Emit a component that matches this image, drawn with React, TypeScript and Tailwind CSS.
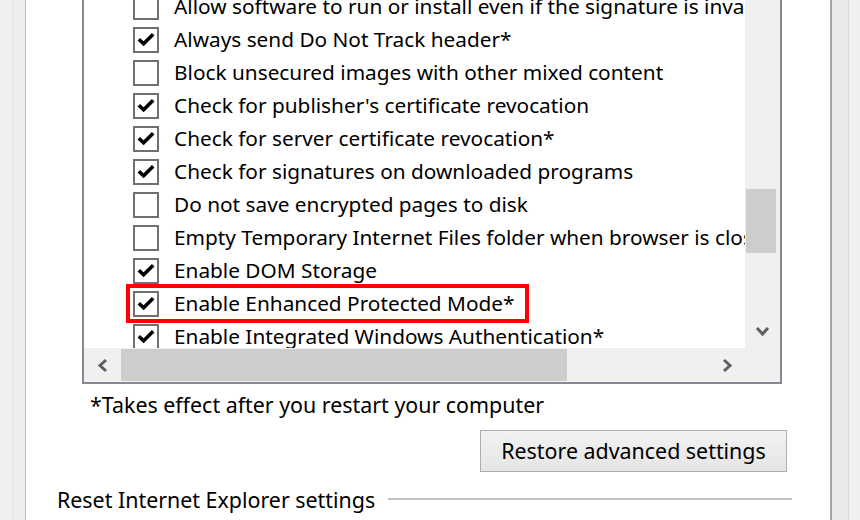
import React from 'react';

type Item = { label: string; checked: boolean; highlight?: boolean };

const items: Item[] = [
  { label: 'Allow software to run or install even if the signature is invalid', checked: false },
  { label: 'Always send Do Not Track header*', checked: true },
  { label: 'Block unsecured images with other mixed content', checked: false },
  { label: "Check for publisher's certificate revocation", checked: true },
  { label: 'Check for server certificate revocation*', checked: true },
  { label: 'Check for signatures on downloaded programs', checked: true },
  { label: 'Do not save encrypted pages to disk', checked: false },
  { label: 'Empty Temporary Internet Files folder when browser is closed', checked: false },
  { label: 'Enable DOM Storage', checked: true },
  { label: 'Enable Enhanced Protected Mode*', checked: true, highlight: true },
  { label: 'Enable Integrated Windows Authentication*', checked: true },
];

function CheckBox({ checked }: { checked: boolean }) {
  return (
    <div className="w-[26px] h-[26px] shrink-0 border-2 border-[#707070] bg-white flex items-center justify-center">
      {checked && (
        <svg width="18" height="15" viewBox="0 0 18 15">
          <path d="M1.8 7.2 L6.6 11.8 L16.2 2.2" fill="none" stroke="#000" strokeWidth="3.6" strokeLinejoin="miter" />
        </svg>
      )}
    </div>
  );
}

function Chevron({ dir }: { dir: 'left' | 'right' | 'down' }) {
  const d =
    dir === 'left' ? 'M9 2 L3 7.5 L9 13' : dir === 'right' ? 'M3 2 L9 7.5 L3 13' : 'M2 3 L7.5 9 L13 3';
  const size = dir === 'down' ? { w: 15, h: 12 } : { w: 12, h: 15 };
  return (
    <svg width={size.w} height={size.h} viewBox={`0 0 ${size.w} ${size.h}`}>
      <path d={d} fill="none" stroke="#606060" strokeWidth="3" />
    </svg>
  );
}

export default function App() {
  return (
    <div
      className="w-[860px] h-[520px] overflow-hidden bg-[#f0f0f0] flex text-black text-[21.4px]"
      style={{ fontFamily: '"Noto Sans", "Open Sans", sans-serif' }}
    >
      {/* left window frame */}
      <div className="w-[12px] bg-[#f0f0f0]" />
      <div className="w-[1px] bg-[#e4e4e4]" />
      <div className="w-[12px] bg-[#ededed]" />
      <div className="w-[1px] bg-[#bdbdbd]" />

      {/* tab page */}
      <div className="w-[804px] bg-white flex flex-col">
        {/* settings list */}
        <div className="ml-[56px] w-[700px] border-x-2 border-b-2 border-[#858a91] flex flex-col">
          <div className="flex h-[348px]">
            <div className="flex-1 relative overflow-hidden text-[20.8px]">
              <div className="-mt-[10px] flex flex-col">
                {items.map((it) => (
                  <div key={it.label} className="h-[33px] flex items-center pl-[49px] relative whitespace-nowrap">
                    <CheckBox checked={it.checked} />
                    <span className="ml-[15px] leading-none">{it.label}</span>
                    {it.highlight && (
                      <div className="absolute left-[42px] -top-[3px] w-[403px] h-[39px] border-4 border-[#ff0000]" />
                    )}
                  </div>
                ))}
              </div>
            </div>
            {/* vertical scrollbar */}
            <div className="w-[35px] bg-[#f0f0f0] flex flex-col">
              <div className="h-[189px]" />
              <div className="ml-[1px] w-[30px] h-[64px] bg-[#cdcdcd]" />
              <div className="flex-1" />
              <div className="h-[35px] flex items-center justify-center">
                <Chevron dir="down" />
              </div>
            </div>
          </div>
          {/* horizontal scrollbar */}
          <div className="flex h-[34px] bg-[#f0f0f0]">
            <div className="w-[37px] flex items-center justify-center">
              <Chevron dir="left" />
            </div>
            <div className="w-[446px] my-[1px] bg-[#cdcdcd]" />
            <div className="flex-1" />
            <div className="w-[37px] flex items-center justify-center">
              <Chevron dir="right" />
            </div>
            <div className="w-[35px]" />
          </div>
        </div>

        <div className="ml-[64px] mt-[8px] h-[26px] leading-[26px]">*Takes effect after you restart your computer</div>

        <div className="mt-[12px] flex justify-end pr-[43px]">
          <button className="w-[307px] h-[42px] border border-[#adadad] bg-gradient-to-b from-[#f2f2f2] to-[#e5e5e5] text-[21.4px]">
            Restore advanced settings
          </button>
        </div>

        <div className="mt-[15px] ml-[31px] mr-[38px] flex items-center">
          <span className="leading-[26px]">Reset Internet Explorer settings</span>
          <div className="flex-1 ml-[13px] h-[2px] bg-[#c2c2c2] mt-[-3px]" />
        </div>
      </div>

      {/* right window frame */}
      <div className="w-[2px] bg-[#a3a3a3]" />
      <div className="w-[16px] bg-[#eaeaea]" />
      <div className="w-[1px] bg-[#d9d9d9]" />
      <div className="flex-1 bg-[#f0f0f0]" />
    </div>
  );
}
